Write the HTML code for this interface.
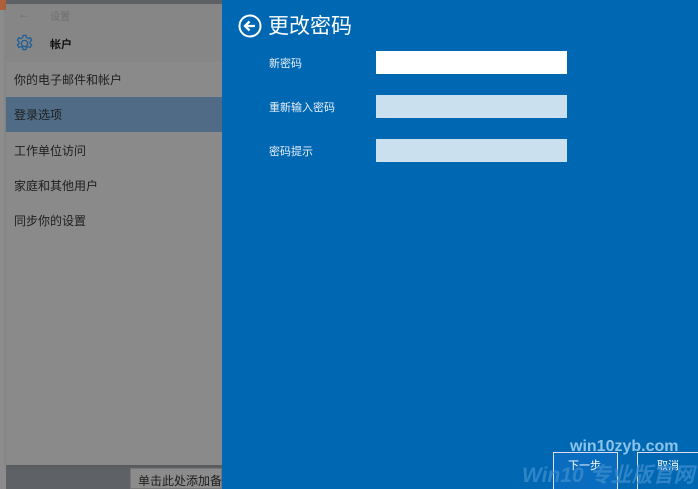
<!DOCTYPE html>
<html style="overflow:hidden"><head><meta charset="utf-8"><style>
html,body{margin:0;width:698px;height:489px;overflow:hidden}
body{position:relative;background:#5e6266;font-family:"Liberation Sans","Noto Sans CJK SC",sans-serif;}
.a{position:absolute}
.win{left:6px;top:4px;width:216px;height:461px;background:#8a8a8a;box-shadow:1px 1px 3px #555}
.hdr{left:6px;top:4px;width:216px;height:58px;background:#868686}
.it{position:absolute;left:14px;font-size:12px;color:#1e1e1e}
.blue{left:222px;top:0;width:476px;height:489px;background:#0067b3}
.lbl{position:absolute;left:269px;font-size:11px;color:#e8f0f8}
.box{position:absolute;left:376px;width:191px;height:23px;background:#cbe0ee}
</style></head><body>
<div class="a" style="left:0;top:0;width:6px;height:10px;background:#b0603a"></div>
<div class="a" style="left:0;top:10px;width:6px;height:479px;background:#8c8c8c"></div>
<div class="a win"></div>
<div class="a hdr"></div>
<div class="a" style="left:18px;top:7px;font-size:12px;color:#6a6a6a">←</div>
<div class="a" style="left:50px;top:8px;font-size:10px;color:#6f6f6f">设置</div>
<svg class="a" style="left:15px;top:34px" width="19" height="19" viewBox="0 0 20 20"><circle cx="10" cy="10" r="3.3" fill="none" stroke="#1b5d96" stroke-width="1.4"/><path d="M8.5 1.5h3l.5 2.3 1.8 1 2.2-.9 1.5 2.6-1.7 1.5v2l1.7 1.5-1.5 2.6-2.2-.9-1.8 1-.5 2.3h-3l-.5-2.3-1.8-1-2.2.9-1.5-2.6 1.7-1.5v-2L2.5 6.5 4 3.9l2.2.9 1.8-1z" fill="none" stroke="#1b5d96" stroke-width="1.3"/></svg>
<div class="a" style="left:50px;top:36px;font-size:11px;font-weight:bold;color:#111">帐户</div>
<div class="it" style="top:71px">你的电子邮件和帐户</div>
<div class="a" style="left:6px;top:97px;width:216px;height:35px;background:#4f6b85"></div>
<div class="it" style="top:106px">登录选项</div>
<div class="it" style="top:142px">工作单位访问</div>
<div class="it" style="top:177px">家庭和其他用户</div>
<div class="it" style="top:212px">同步你的设置</div>
<div class="a" style="left:130px;top:468px;width:92px;height:21px;background:#8c8c8c;border:1px solid #777;box-sizing:border-box"></div>
<div class="a" style="left:138px;top:472px;font-size:12px;color:#1e1e1e;white-space:nowrap;width:84px;overflow:hidden">单击此处添加备注</div>
<div class="a blue"></div>
<svg class="a" style="left:238px;top:14px" width="24" height="24" viewBox="0 0 24 24"><circle cx="12" cy="12" r="10.5" fill="none" stroke="#fff" stroke-width="2"/><path d="M17 12H7.5M11.5 7.5 7 12l4.5 4.5" fill="none" stroke="#fff" stroke-width="2.3"/></svg>
<div class="a" style="left:268px;top:10px;font-size:21px;color:#fff">更改密码</div>
<div class="lbl" style="top:55px">新密码</div>
<div class="box" style="top:51px;background:#fff"></div>
<div class="lbl" style="top:99px">重新输入密码</div>
<div class="box" style="top:95px"></div>
<div class="lbl" style="top:143px">密码提示</div>
<div class="box" style="top:139px"></div>
<div class="a" style="left:553px;top:452px;width:65px;height:37px;border:1px solid #dde;border-bottom:none;box-sizing:border-box;background:#0a6cbf"></div>
<div class="a" style="left:637px;top:452px;width:61px;height:37px;border:1px solid #dde;border-right:none;border-bottom:none;box-sizing:border-box"></div>
<div class="a" style="left:568px;top:457px;font-size:11px;color:#fff">下一步</div>
<div class="a" style="left:657px;top:457px;font-size:11px;color:#fff">取消</div>
<div class="a" style="left:570px;top:438px;font-size:16px;font-weight:bold;color:#8cc4e8">win10zyb.com</div>
<div class="a" style="left:522px;top:464px;font-size:21px;line-height:24px;font-weight:bold;font-style:italic;color:#3a8ccc;opacity:.8;white-space:nowrap">Win10 专业版官网</div>
</body></html>
